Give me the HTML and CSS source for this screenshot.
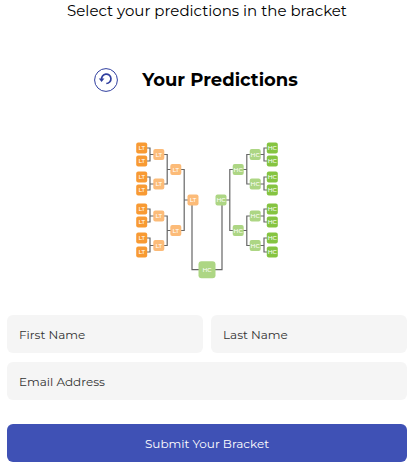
FILE: index.html
```html
<!DOCTYPE html>
<html lang="en">
<head>
    <meta charset="UTF-8">
    <meta name="viewport" content="width=device-width, initial-scale=1.0">
    <title>Your Predictions</title>
    <link rel="stylesheet" href="styles.css">
</head>
<body>
    <main class="page">
        <p class="intro">Select your predictions in the bracket</p>

        <div class="heading">
            <button type="button" class="reset" aria-label="Reset bracket">
                <svg viewBox="0 0 24 24" width="24" height="24">
                    <circle cx="12" cy="12" r="11.4" fill="none" stroke="currentColor" stroke-width="1" />
                    <path d="M7.6 11.5 A4.7 4.7 0 1 1 12.3 15.5" fill="none" stroke="currentColor" stroke-width="1.7" />
                    <path d="M4.8 10.6 H10.4 L7.6 14 Z" fill="currentColor" />
                </svg>
            </button>
            <h1>Your Predictions</h1>
        </div>

        <svg class="bracket" viewBox="0 0 144 138" width="144" height="138" role="img" aria-label="Tournament bracket">
            <g id="lines" class="lines"></g>
            <g id="nodes"></g>
        </svg>

        <form class="entry-form">
            <input type="text" placeholder="First Name" aria-label="First Name">
            <input type="text" placeholder="Last Name" aria-label="Last Name">
            <input type="email" class="wide" placeholder="Email Address" aria-label="Email Address">
            <button type="submit" class="submit wide">Submit Your Bracket</button>
        </form>
    </main>

    <script src="bracket.js"></script>
</body>
</html>
```

FILE: styles.css
```css
* {
    box-sizing: border-box;
}
body {
    font-family: Montserrat, Inter, sans-serif;
    margin: 0;
    background-color: #fff;
    color: #000;
}
.page {
    display: flex;
    flex-direction: column;
    align-items: center;
    padding: 0 10px 10px 7px;
}
.intro {
    margin: 0;
    font-size: 15px;
    line-height: 22px;
}
.heading {
    display: flex;
    align-items: center;
    gap: 24px;
    margin-top: 46px;
    padding-right: 22px;
}
.heading h1 {
    margin: 0;
    font-size: 18px;
    font-weight: 700;
    line-height: 24px;
}
.reset {
    display: flex;
    padding: 0;
    border: none;
    background: none;
    color: #303f9f;
    cursor: pointer;
}

.bracket {
    display: block;
    margin-top: 49px;
}
.lines {
    fill: none;
    stroke: #666;
    stroke-width: 1.2;
}
.node-text {
    fill: #fff;
    font-size: 6px;
    font-weight: 500;
    text-anchor: middle;
}
.lt-first {
    fill: #f89a33;
}
.lt {
    fill: #fcbb78;
}
.hc-first {
    fill: #85c441;
}
.hc {
    fill: #add684;
}

.entry-form {
    display: grid;
    grid-template-columns: 1fr 1fr;
    gap: 9px 8px;
    width: 100%;
    margin-top: 36px;
}
.wide {
    grid-column: 1 / -1;
}
.entry-form input {
    width: 100%;
    height: 38px;
    padding: 0 12px;
    border: none;
    border-radius: 6px;
    background-color: #f5f5f5;
    color: #333;
    font-family: inherit;
    font-size: 12px;
}
.entry-form input::placeholder {
    color: #333;
    opacity: 1;
}
.submit {
    height: 38px;
    margin-top: 15px;
    border: none;
    border-radius: 6px;
    background-color: #3f51b5;
    color: #fff;
    font-family: inherit;
    font-size: 12px;
    cursor: pointer;
}
```

FILE: bracket.js
```javascript
// Centre heights of the nodes, round by round
const rounds = [
    [7, 20, 36, 49, 68, 81, 97, 111],
    [13.5, 43, 75, 104.5],
    [28.5, 89.5],
    [59]
];
const columns = [6.7, 23.8, 40.8, 58];
const joints = [15, 32.2, 49.2];
const finalY = 128.7;
const width = 144;

const lines = document.getElementById("lines");
const nodes = document.getElementById("nodes");

function add(parent, tag, attributes) {
    const element = document.createElementNS("http://www.w3.org/2000/svg", tag);
    for (const name in attributes) {
        element.setAttribute(name, attributes[name]);
    }
    parent.appendChild(element);
    return element;
}

function addNode(x, y, size, team, style) {
    add(nodes, "rect", {
        x: x - size / 2,
        y: y - size / 2,
        width: size,
        height: size,
        rx: size > 12 ? 3 : 2,
        class: style
    });
    add(nodes, "text", { x: x, y: y + 2, class: "node-text" }).textContent = team;
}

function drawSide(team, place) {
    const style = team.toLowerCase();
    rounds.forEach((round, index) => {
        round.forEach((y, i) => {
            addNode(place(columns[index]), y, 11, team, index === 0 ? style + "-first" : style);
            if (i % 2 === 1) {
                // two nodes join and lead to the next round
                const joint = place(joints[index]);
                const start = place(columns[index]);
                add(lines, "path", {
                    d: `M${start} ${round[i - 1]} H${joint} V${y} H${start} M${joint} ${rounds[index + 1][(i - 1) / 2]} H${place(columns[index + 1])}`
                });
            }
        });
    });
    add(lines, "path", { d: `M${place(57)} ${rounds[3][0]} V${finalY} H${width / 2}` });
}

drawSide("LT", x => x);
drawSide("HC", x => width - x);
addNode(width / 2, finalY, 17, "HC", "hc");
```
